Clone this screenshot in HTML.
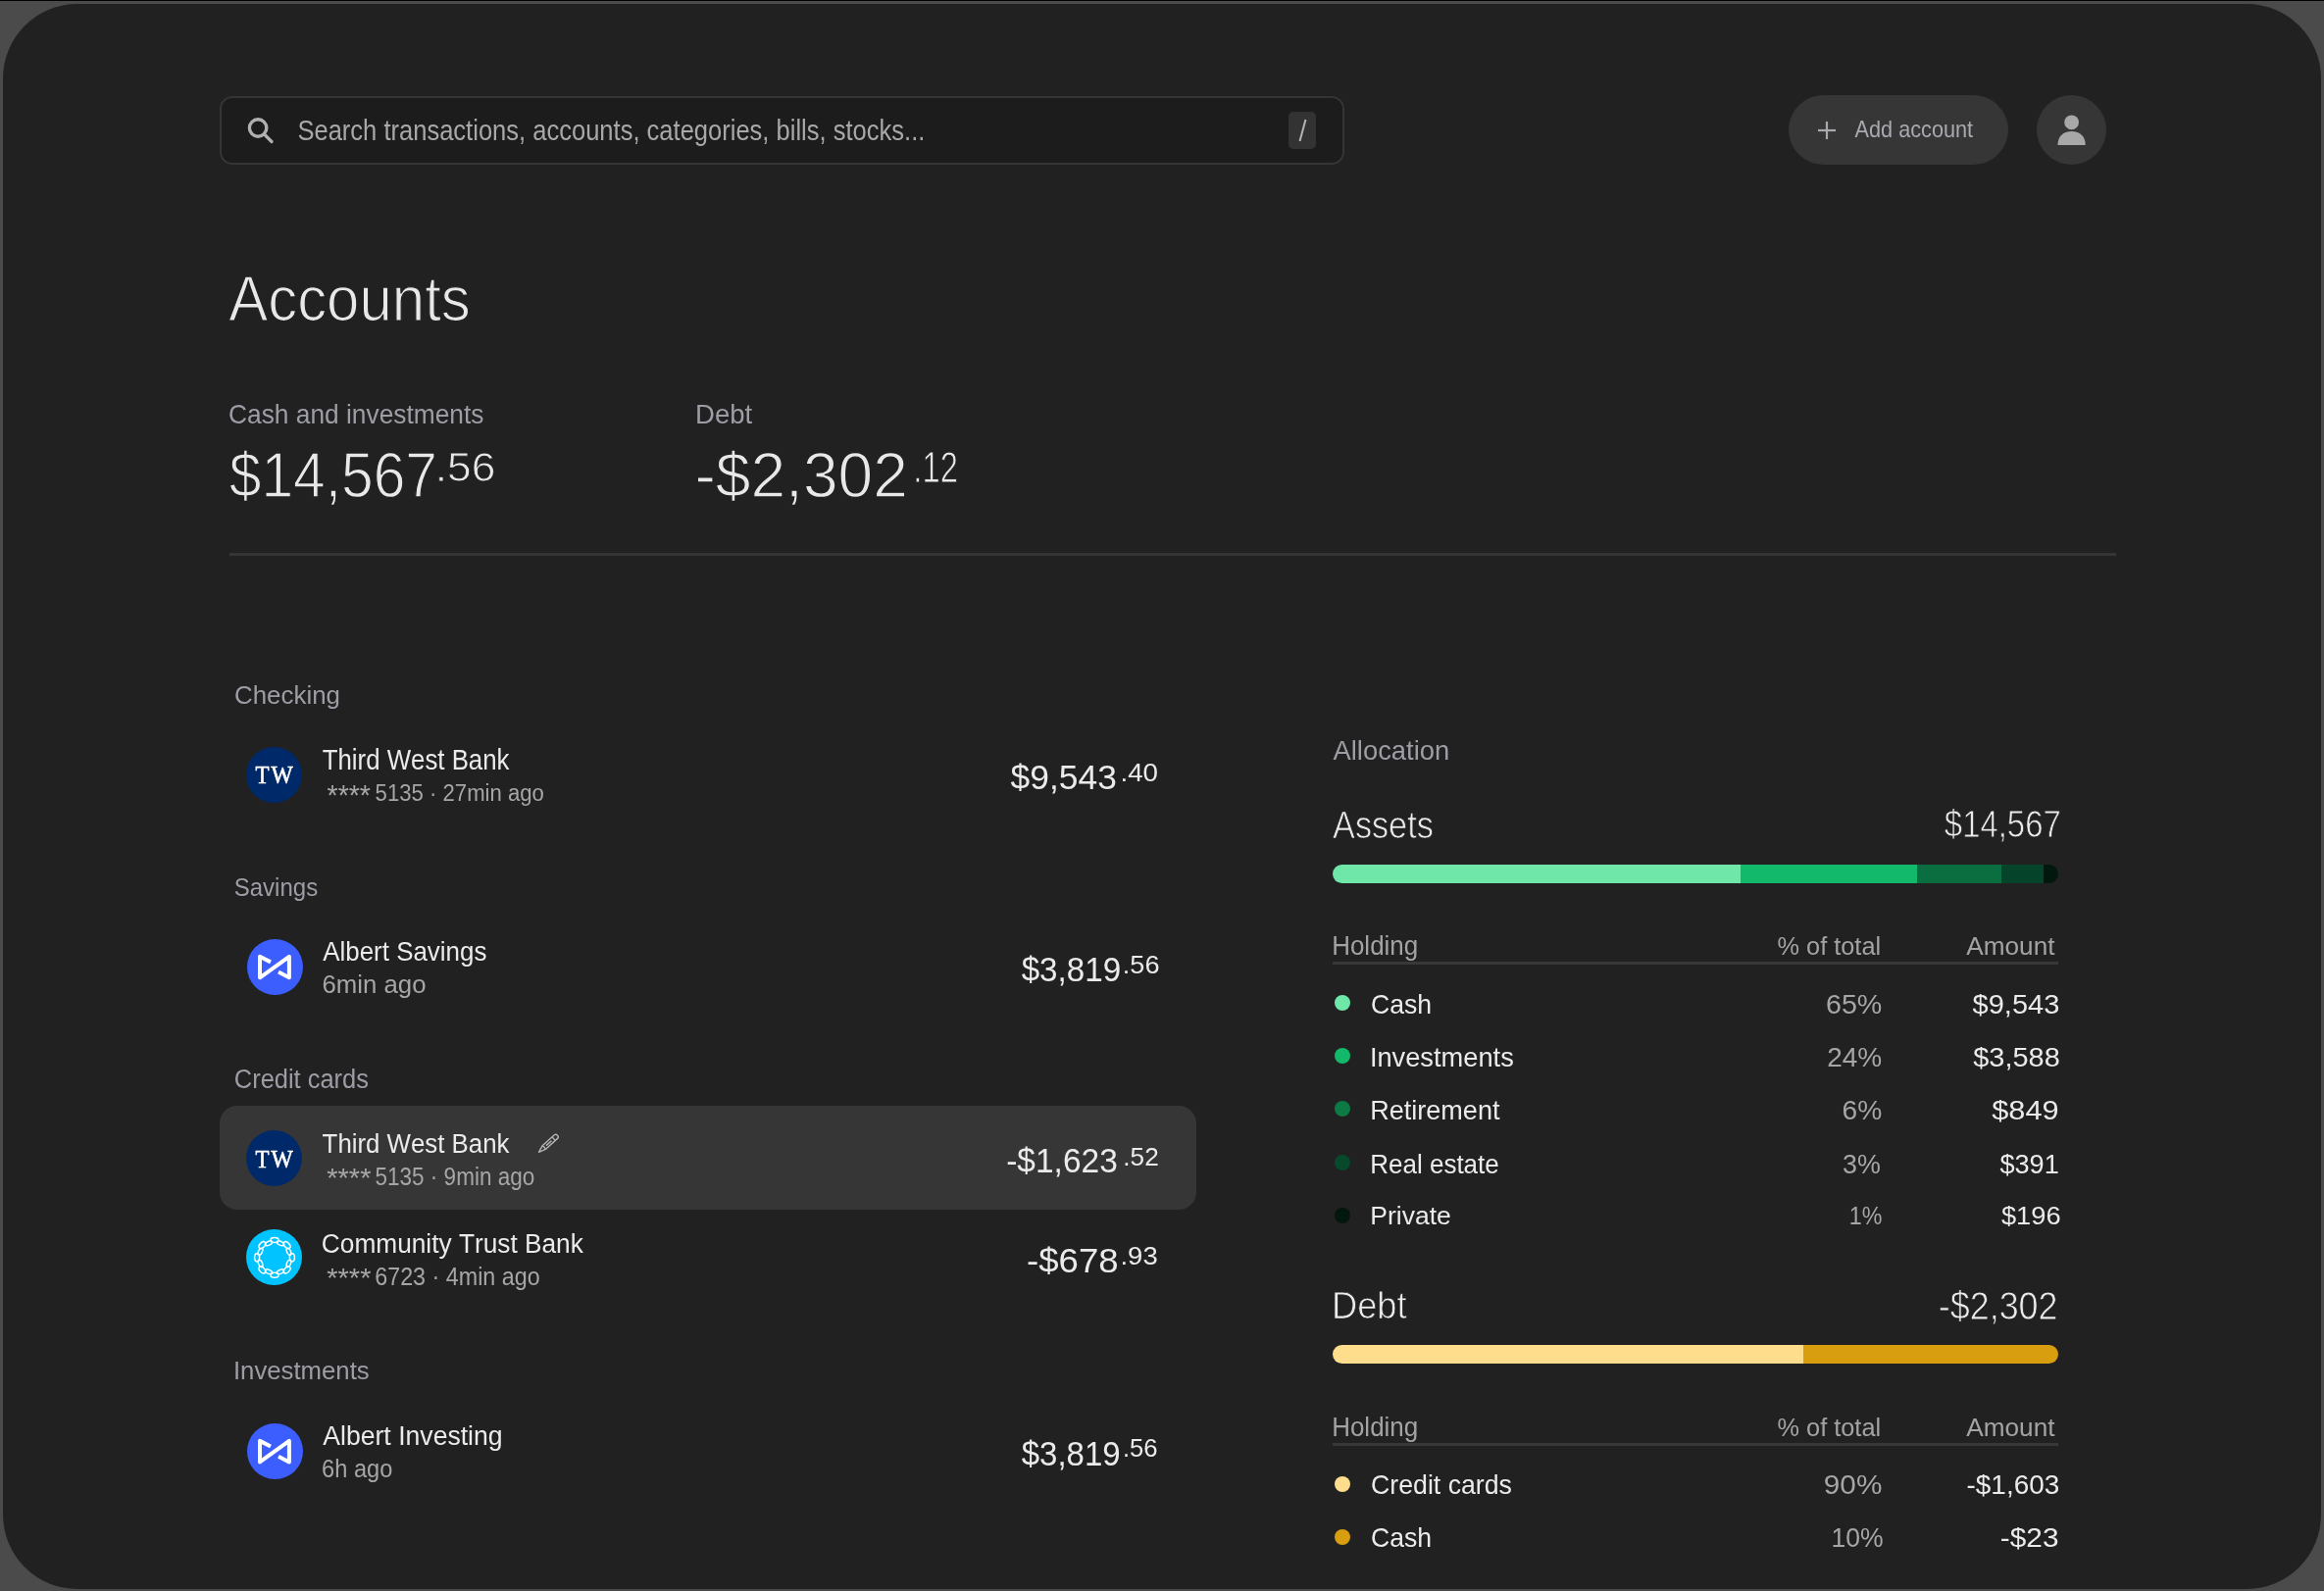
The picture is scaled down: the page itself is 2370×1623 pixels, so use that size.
<!DOCTYPE html>
<html><head><meta charset="utf-8"><title>Accounts</title>
<style>
html,body{margin:0;padding:0;width:2370px;height:1623px;overflow:hidden;background:#4b4b4b;font-family:"Liberation Sans",sans-serif}
.abs{position:absolute}
#topline{left:0;top:0;width:2370px;height:1px;background:#000}
#win{left:3px;top:4px;width:2364px;height:1617px;border-radius:76px;background:#212121}
#search{left:224px;top:98px;width:1143px;height:66px;border:2px solid #353535;border-radius:13px;background:#1c1c1c}
#key{left:1314px;top:114px;width:28px;height:38px;border-radius:5px;background:#333}
#addbtn{left:1824px;top:97px;width:224px;height:71px;border-radius:36px;background:#363636}
#avatar{left:2077px;top:97px;width:71px;height:71px;border-radius:50%;background:#363636}
#divider{left:234px;top:564px;width:1924px;height:3px;background:#353535}
#hl{left:224px;top:1128px;width:996px;height:106px;border-radius:18px;background:#363636}
.logo{width:57px;height:57px;border-radius:50%}
.tw{background:#00296a}
.alb{background:#3d5eff}
.ctb{background:#00c3ff}
.bar{height:19px;border-radius:10px;overflow:hidden;display:flex}
.bar div{height:100%}
.hline{height:3px;background:#383838}
.dot{width:16px;height:16px;border-radius:50%}
svg{position:absolute;left:0;top:0;will-change:transform}
text{font-family:"Liberation Sans",sans-serif;font-kerning:none}
</style></head>
<body>
<div class="abs" id="topline"></div>
<div class="abs" id="win"></div>
<div class="abs" id="search"></div>
<div class="abs" id="key"></div>
<div class="abs" id="addbtn"></div>
<div class="abs" id="avatar"></div>
<div class="abs" id="divider"></div>
<div class="abs" id="hl"></div>

<div class="abs logo tw" style="left:251px;top:762px"></div>
<div class="abs logo alb" style="left:252px;top:958px"></div>
<div class="abs logo tw" style="left:251px;top:1153px"></div>
<div class="abs logo ctb" style="left:251px;top:1254px"></div>
<div class="abs logo alb" style="left:252px;top:1452px"></div>

<div class="abs bar" style="left:1359px;top:882px;width:740px">
  <div style="width:416px;background:#6ee7a8"></div>
  <div style="width:180px;background:#12b96b"></div>
  <div style="width:86px;background:#0b6e41"></div>
  <div style="width:43px;background:#05432a"></div>
  <div style="width:15px;background:#02170d"></div>
</div>
<div class="abs bar" style="left:1359px;top:1372px;width:740px">
  <div style="width:480px;background:#fedd8c"></div>
  <div style="width:260px;background:#d99e10"></div>
</div>
<div class="abs hline" style="left:1359px;top:981px;width:740px"></div>
<div class="abs hline" style="left:1359px;top:1472px;width:740px"></div>

<div class="abs dot" style="left:1361px;top:1015px;background:#6ee7a8"></div>
<div class="abs dot" style="left:1361px;top:1069px;background:#12b96b"></div>
<div class="abs dot" style="left:1361px;top:1123px;background:#0b7a44"></div>
<div class="abs dot" style="left:1361px;top:1178px;background:#064a2b"></div>
<div class="abs dot" style="left:1361px;top:1232px;background:#02180e"></div>
<div class="abs dot" style="left:1361px;top:1506px;background:#fedd8c"></div>
<div class="abs dot" style="left:1361px;top:1560px;background:#d99e10"></div>

<svg width="2370" height="1623" viewBox="0 0 2370 1623">
<!-- search icon -->
<circle cx="263.1" cy="130.5" r="8.7" fill="none" stroke="#b0b0b0" stroke-width="3.4"/>
<line x1="269.5" y1="137" x2="277" y2="144.5" stroke="#b0b0b0" stroke-width="3.2" stroke-linecap="round"/>
<!-- slash -->
<line x1="1331.5" y1="122" x2="1325.5" y2="144" stroke="#b5b5b5" stroke-width="2"/>
<!-- plus -->
<line x1="1854" y1="133" x2="1872" y2="133" stroke="#a9a9b0" stroke-width="2.2"/>
<line x1="1863" y1="124" x2="1863" y2="142" stroke="#a9a9b0" stroke-width="2.2"/>
<!-- person -->
<circle cx="2112.6" cy="124.8" r="7.4" fill="#a8a8a8"/>
<path d="M2098.5 148 C2098.5 139 2104 134 2112.6 134 C2121.2 134 2126.7 139 2126.7 148 Z" fill="#a8a8a8"/>
<path transform="translate(251.6 958.2)" d="M24.4 23.2 L13.4 17.6 L13.4 39.1 L43.3 17.6 L43.3 39.1 L32.4 33.4" fill="none" stroke="#fff" stroke-width="4" stroke-linejoin="round"/>
<path transform="translate(251.6 1452.3)" d="M24.4 23.2 L13.4 17.6 L13.4 39.1 L43.3 17.6 L43.3 39.1 L32.4 33.4" fill="none" stroke="#fff" stroke-width="4" stroke-linejoin="round"/>
<ellipse cx="280.00" cy="1264.90" rx="4.10" ry="2.50" transform="rotate(0.0 280.00 1264.90)" fill="none" stroke="#fff" stroke-width="1.5"/>
<ellipse cx="286.01" cy="1268.30" rx="3.80" ry="2.00" transform="rotate(22.5 286.01 1268.30)" fill="none" stroke="#fff" stroke-width="1.5"/>
<ellipse cx="292.66" cy="1270.14" rx="4.10" ry="2.50" transform="rotate(45.0 292.66 1270.14)" fill="none" stroke="#fff" stroke-width="1.5"/>
<ellipse cx="294.50" cy="1276.79" rx="3.80" ry="2.00" transform="rotate(67.5 294.50 1276.79)" fill="none" stroke="#fff" stroke-width="1.5"/>
<ellipse cx="297.90" cy="1282.80" rx="4.10" ry="2.50" transform="rotate(90.0 297.90 1282.80)" fill="none" stroke="#fff" stroke-width="1.5"/>
<ellipse cx="294.50" cy="1288.81" rx="3.80" ry="2.00" transform="rotate(112.5 294.50 1288.81)" fill="none" stroke="#fff" stroke-width="1.5"/>
<ellipse cx="292.66" cy="1295.46" rx="4.10" ry="2.50" transform="rotate(135.0 292.66 1295.46)" fill="none" stroke="#fff" stroke-width="1.5"/>
<ellipse cx="286.01" cy="1297.30" rx="3.80" ry="2.00" transform="rotate(157.5 286.01 1297.30)" fill="none" stroke="#fff" stroke-width="1.5"/>
<ellipse cx="280.00" cy="1300.70" rx="4.10" ry="2.50" transform="rotate(180.0 280.00 1300.70)" fill="none" stroke="#fff" stroke-width="1.5"/>
<ellipse cx="273.99" cy="1297.30" rx="3.80" ry="2.00" transform="rotate(202.5 273.99 1297.30)" fill="none" stroke="#fff" stroke-width="1.5"/>
<ellipse cx="267.34" cy="1295.46" rx="4.10" ry="2.50" transform="rotate(225.0 267.34 1295.46)" fill="none" stroke="#fff" stroke-width="1.5"/>
<ellipse cx="265.50" cy="1288.81" rx="3.80" ry="2.00" transform="rotate(247.5 265.50 1288.81)" fill="none" stroke="#fff" stroke-width="1.5"/>
<ellipse cx="262.10" cy="1282.80" rx="4.10" ry="2.50" transform="rotate(270.0 262.10 1282.80)" fill="none" stroke="#fff" stroke-width="1.5"/>
<ellipse cx="265.50" cy="1276.79" rx="3.80" ry="2.00" transform="rotate(292.5 265.50 1276.79)" fill="none" stroke="#fff" stroke-width="1.5"/>
<ellipse cx="267.34" cy="1270.14" rx="4.10" ry="2.50" transform="rotate(315.0 267.34 1270.14)" fill="none" stroke="#fff" stroke-width="1.5"/>
<ellipse cx="273.99" cy="1268.30" rx="3.80" ry="2.00" transform="rotate(337.5 273.99 1268.30)" fill="none" stroke="#fff" stroke-width="1.5"/>
<g transform="translate(549.5 1175.3) rotate(-42)" fill="none" stroke="#b4b4b4" stroke-width="1.4" stroke-linejoin="round"><path d="M0 0 L7 -2.4 L23.5 -2.4 Q25.5 -2.4 25.5 -0.4 L25.5 0.4 Q25.5 2.4 23.5 2.4 L7 2.4 Z"/><path d="M7 -2.4 Q8 0 7 2.4"/><path d="M20.4 -2.4 L20.4 2.4"/><path d="M10 0 L17.4 0"/></g>
<text x="260.39" y="799.20" font-size="25.19" fill="#ffffff" textLength="13.99" lengthAdjust="spacingAndGlyphs" style="font-family:'Liberation Serif'" stroke="#fff" stroke-width="0.6">T</text>
<text x="276.48" y="799.20" font-size="25.19" fill="#ffffff" textLength="22.27" lengthAdjust="spacingAndGlyphs" style="font-family:'Liberation Serif'" stroke="#fff" stroke-width="0.6">W</text>
<text x="260.39" y="1190.70" font-size="25.19" fill="#ffffff" textLength="13.99" lengthAdjust="spacingAndGlyphs" style="font-family:'Liberation Serif'" stroke="#fff" stroke-width="0.6">T</text>
<text x="276.48" y="1190.70" font-size="25.19" fill="#ffffff" textLength="22.27" lengthAdjust="spacingAndGlyphs" style="font-family:'Liberation Serif'" stroke="#fff" stroke-width="0.6">W</text>
<text x="303.44" y="142.70" font-size="29.13" fill="#a8a8a8" textLength="639.89" lengthAdjust="spacingAndGlyphs" style="font-family:'Liberation Sans'">Search transactions, accounts, categories, bills, stocks...</text>
<text x="1891.56" y="140.00" font-size="23.19" fill="#a9a9b0" textLength="120.60" lengthAdjust="spacingAndGlyphs" style="font-family:'Liberation Sans'">Add account</text>
<text x="233.16" y="326.83" font-size="64.42" fill="#e8e8e8" textLength="246.64" lengthAdjust="spacingAndGlyphs" style="font-family:'Liberation Sans'" stroke="#212121" stroke-width="1.25">Accounts</text>
<text x="233.06" y="431.80" font-size="28.12" fill="#9d9da6" textLength="260.39" lengthAdjust="spacingAndGlyphs" style="font-family:'Liberation Sans'">Cash and investments</text>
<text x="233.73" y="506.64" font-size="65.62" fill="#e8e8e8" textLength="212.26" lengthAdjust="spacingAndGlyphs" style="font-family:'Liberation Sans'" stroke="#212121" stroke-width="1.28">$14,567</text>
<text x="443.84" y="491.42" font-size="43.25" fill="#e8e8e8" textLength="61.53" lengthAdjust="spacingAndGlyphs" style="font-family:'Liberation Sans'" stroke="#212121" stroke-width="0.84">.56</text>
<text x="709.04" y="431.60" font-size="27.83" fill="#9d9da6" textLength="58.16" lengthAdjust="spacingAndGlyphs" style="font-family:'Liberation Sans'">Debt</text>
<text x="708.51" y="507.34" font-size="65.62" fill="#e8e8e8" textLength="217.35" lengthAdjust="spacingAndGlyphs" style="font-family:'Liberation Sans'" stroke="#212121" stroke-width="1.28">-$2,302</text>
<text x="931.37" y="492.04" font-size="45.04" fill="#e8e8e8" textLength="45.51" lengthAdjust="spacingAndGlyphs" style="font-family:'Liberation Sans'" stroke="#212121" stroke-width="0.88">.12</text>
<text x="238.98" y="718.20" font-size="25.94" fill="#9d9da6" textLength="107.98" lengthAdjust="spacingAndGlyphs" style="font-family:'Liberation Sans'">Checking</text>
<text x="328.72" y="784.60" font-size="28.84" fill="#ebebeb" textLength="190.74" lengthAdjust="spacingAndGlyphs" style="font-family:'Liberation Sans'">Third West Bank</text>
<text x="333.54" y="820.69" font-size="29.34" fill="#a6a6a6" textLength="44.41" lengthAdjust="spacingAndGlyphs" style="font-family:'Liberation Sans'">****</text>
<text x="382.61" y="817.30" font-size="24.35" fill="#a6a6a6" textLength="172.32" lengthAdjust="spacingAndGlyphs" style="font-family:'Liberation Sans'">5135 · 27min ago</text>
<text x="1030.62" y="805.00" font-size="34.78" fill="#ebebeb" textLength="108.24" lengthAdjust="spacingAndGlyphs" style="font-family:'Liberation Sans'">$9,543</text>
<text x="1142.46" y="797.00" font-size="26.09" fill="#ebebeb" textLength="38.62" lengthAdjust="spacingAndGlyphs" style="font-family:'Liberation Sans'">.40</text>
<text x="238.71" y="913.60" font-size="25.80" fill="#9d9da6" textLength="85.46" lengthAdjust="spacingAndGlyphs" style="font-family:'Liberation Sans'">Savings</text>
<text x="329.25" y="980.20" font-size="27.54" fill="#ebebeb" textLength="167.09" lengthAdjust="spacingAndGlyphs" style="font-family:'Liberation Sans'">Albert Savings</text>
<text x="328.49" y="1012.90" font-size="24.93" fill="#a6a6a6" textLength="105.99" lengthAdjust="spacingAndGlyphs" style="font-family:'Liberation Sans'">6min ago</text>
<text x="1041.64" y="1001.10" font-size="35.36" fill="#ebebeb" textLength="101.53" lengthAdjust="spacingAndGlyphs" style="font-family:'Liberation Sans'">$3,819</text>
<text x="1144.83" y="993.00" font-size="26.38" fill="#ebebeb" textLength="37.66" lengthAdjust="spacingAndGlyphs" style="font-family:'Liberation Sans'">.56</text>
<text x="238.81" y="1109.80" font-size="26.81" fill="#9d9da6" textLength="137.11" lengthAdjust="spacingAndGlyphs" style="font-family:'Liberation Sans'">Credit cards</text>
<text x="328.62" y="1175.70" font-size="27.39" fill="#ebebeb" textLength="190.84" lengthAdjust="spacingAndGlyphs" style="font-family:'Liberation Sans'">Third West Bank</text>
<text x="333.23" y="1210.60" font-size="28.49" fill="#a6a6a6" textLength="45.22" lengthAdjust="spacingAndGlyphs" style="font-family:'Liberation Sans'">****</text>
<text x="382.50" y="1209.20" font-size="26.38" fill="#a6a6a6" textLength="162.75" lengthAdjust="spacingAndGlyphs" style="font-family:'Liberation Sans'">5135 · 9min ago</text>
<text x="1026.21" y="1196.40" font-size="35.07" fill="#ebebeb" textLength="113.56" lengthAdjust="spacingAndGlyphs" style="font-family:'Liberation Sans'">-$1,623</text>
<text x="1145.31" y="1188.80" font-size="26.09" fill="#ebebeb" textLength="36.41" lengthAdjust="spacingAndGlyphs" style="font-family:'Liberation Sans'">.52</text>
<text x="327.87" y="1277.80" font-size="27.39" fill="#ebebeb" textLength="266.99" lengthAdjust="spacingAndGlyphs" style="font-family:'Liberation Sans'">Community Trust Bank</text>
<text x="333.23" y="1312.80" font-size="28.49" fill="#a6a6a6" textLength="45.22" lengthAdjust="spacingAndGlyphs" style="font-family:'Liberation Sans'">****</text>
<text x="382.22" y="1311.30" font-size="26.23" fill="#a6a6a6" textLength="168.46" lengthAdjust="spacingAndGlyphs" style="font-family:'Liberation Sans'">6723 · 4min ago</text>
<text x="1047.08" y="1298.30" font-size="34.49" fill="#ebebeb" textLength="93.51" lengthAdjust="spacingAndGlyphs" style="font-family:'Liberation Sans'">-$678</text>
<text x="1142.49" y="1290.40" font-size="25.94" fill="#ebebeb" textLength="38.22" lengthAdjust="spacingAndGlyphs" style="font-family:'Liberation Sans'">.93</text>
<text x="237.92" y="1407.00" font-size="24.93" fill="#9d9da6" textLength="138.81" lengthAdjust="spacingAndGlyphs" style="font-family:'Liberation Sans'">Investments</text>
<text x="329.25" y="1474.10" font-size="28.12" fill="#ebebeb" textLength="183.37" lengthAdjust="spacingAndGlyphs" style="font-family:'Liberation Sans'">Albert Investing</text>
<text x="328.10" y="1506.80" font-size="24.93" fill="#a6a6a6" textLength="72.19" lengthAdjust="spacingAndGlyphs" style="font-family:'Liberation Sans'">6h ago</text>
<text x="1041.65" y="1494.50" font-size="35.36" fill="#ebebeb" textLength="101.02" lengthAdjust="spacingAndGlyphs" style="font-family:'Liberation Sans'">$3,819</text>
<text x="1144.96" y="1486.20" font-size="26.09" fill="#ebebeb" textLength="35.67" lengthAdjust="spacingAndGlyphs" style="font-family:'Liberation Sans'">.56</text>
<text x="1359.45" y="775.20" font-size="27.97" fill="#9d9da6" textLength="118.83" lengthAdjust="spacingAndGlyphs" style="font-family:'Liberation Sans'">Allocation</text>
<text x="1359.06" y="854.57" font-size="38.18" fill="#ebebeb" textLength="102.75" lengthAdjust="spacingAndGlyphs" style="font-family:'Liberation Sans'" stroke="#212121" stroke-width="0.74">Assets</text>
<text x="1982.87" y="854.38" font-size="39.07" fill="#ebebeb" textLength="118.87" lengthAdjust="spacingAndGlyphs" style="font-family:'Liberation Sans'" stroke="#212121" stroke-width="0.76">$14,567</text>
<text x="1358.17" y="974.40" font-size="26.96" fill="#a3a3a3" textLength="88.11" lengthAdjust="spacingAndGlyphs" style="font-family:'Liberation Sans'">Holding</text>
<text x="1812.50" y="974.00" font-size="26.09" fill="#a3a3a3" textLength="105.60" lengthAdjust="spacingAndGlyphs" style="font-family:'Liberation Sans'">% of total</text>
<text x="2005.25" y="974.00" font-size="26.09" fill="#a3a3a3" textLength="90.24" lengthAdjust="spacingAndGlyphs" style="font-family:'Liberation Sans'">Amount</text>
<text x="1358.17" y="1465.10" font-size="27.39" fill="#a3a3a3" textLength="88.11" lengthAdjust="spacingAndGlyphs" style="font-family:'Liberation Sans'">Holding</text>
<text x="1812.50" y="1464.70" font-size="26.52" fill="#a3a3a3" textLength="105.60" lengthAdjust="spacingAndGlyphs" style="font-family:'Liberation Sans'">% of total</text>
<text x="2005.25" y="1464.70" font-size="26.52" fill="#a3a3a3" textLength="90.24" lengthAdjust="spacingAndGlyphs" style="font-family:'Liberation Sans'">Amount</text>
<text x="1398.05" y="1033.60" font-size="27.97" fill="#ebebeb" textLength="62.08" lengthAdjust="spacingAndGlyphs" style="font-family:'Liberation Sans'">Cash</text>
<text x="1861.94" y="1033.60" font-size="27.97" fill="#a6a6a6" textLength="57.38" lengthAdjust="spacingAndGlyphs" style="font-family:'Liberation Sans'">65%</text>
<text x="2011.59" y="1033.60" font-size="27.97" fill="#ebebeb" textLength="88.69" lengthAdjust="spacingAndGlyphs" style="font-family:'Liberation Sans'">$9,543</text>
<text x="1396.89" y="1088.00" font-size="27.54" fill="#ebebeb" textLength="146.90" lengthAdjust="spacingAndGlyphs" style="font-family:'Liberation Sans'">Investments</text>
<text x="1863.19" y="1088.00" font-size="27.54" fill="#a6a6a6" textLength="56.11" lengthAdjust="spacingAndGlyphs" style="font-family:'Liberation Sans'">24%</text>
<text x="2012.29" y="1088.00" font-size="27.54" fill="#ebebeb" textLength="88.47" lengthAdjust="spacingAndGlyphs" style="font-family:'Liberation Sans'">$3,588</text>
<text x="1397.18" y="1142.20" font-size="27.54" fill="#ebebeb" textLength="132.32" lengthAdjust="spacingAndGlyphs" style="font-family:'Liberation Sans'">Retirement</text>
<text x="1878.57" y="1142.20" font-size="27.54" fill="#a6a6a6" textLength="40.74" lengthAdjust="spacingAndGlyphs" style="font-family:'Liberation Sans'">6%</text>
<text x="2031.27" y="1142.20" font-size="27.54" fill="#ebebeb" textLength="68.39" lengthAdjust="spacingAndGlyphs" style="font-family:'Liberation Sans'">$849</text>
<text x="1397.27" y="1197.20" font-size="28.12" fill="#ebebeb" textLength="131.49" lengthAdjust="spacingAndGlyphs" style="font-family:'Liberation Sans'">Real estate</text>
<text x="1878.98" y="1197.20" font-size="28.12" fill="#a6a6a6" textLength="38.78" lengthAdjust="spacingAndGlyphs" style="font-family:'Liberation Sans'">3%</text>
<text x="2039.41" y="1197.20" font-size="28.12" fill="#ebebeb" textLength="60.42" lengthAdjust="spacingAndGlyphs" style="font-family:'Liberation Sans'">$391</text>
<text x="1397.22" y="1248.90" font-size="26.67" fill="#ebebeb" textLength="82.55" lengthAdjust="spacingAndGlyphs" style="font-family:'Liberation Sans'">Private</text>
<text x="1885.73" y="1248.90" font-size="26.67" fill="#a6a6a6" textLength="33.60" lengthAdjust="spacingAndGlyphs" style="font-family:'Liberation Sans'">1%</text>
<text x="2040.91" y="1248.90" font-size="26.67" fill="#ebebeb" textLength="60.69" lengthAdjust="spacingAndGlyphs" style="font-family:'Liberation Sans'">$196</text>
<text x="1398.04" y="1524.10" font-size="28.12" fill="#ebebeb" textLength="143.92" lengthAdjust="spacingAndGlyphs" style="font-family:'Liberation Sans'">Credit cards</text>
<text x="1859.81" y="1524.10" font-size="28.12" fill="#a6a6a6" textLength="59.56" lengthAdjust="spacingAndGlyphs" style="font-family:'Liberation Sans'">90%</text>
<text x="2005.56" y="1524.10" font-size="28.12" fill="#ebebeb" textLength="94.67" lengthAdjust="spacingAndGlyphs" style="font-family:'Liberation Sans'">-$1,603</text>
<text x="1398.05" y="1578.00" font-size="27.68" fill="#ebebeb" textLength="62.08" lengthAdjust="spacingAndGlyphs" style="font-family:'Liberation Sans'">Cash</text>
<text x="1867.48" y="1578.00" font-size="27.68" fill="#a6a6a6" textLength="53.17" lengthAdjust="spacingAndGlyphs" style="font-family:'Liberation Sans'">10%</text>
<text x="2039.88" y="1578.00" font-size="27.68" fill="#ebebeb" textLength="59.63" lengthAdjust="spacingAndGlyphs" style="font-family:'Liberation Sans'">-$23</text>
<text x="1357.95" y="1345.18" font-size="38.62" fill="#ebebeb" textLength="76.70" lengthAdjust="spacingAndGlyphs" style="font-family:'Liberation Sans'" stroke="#212121" stroke-width="0.75">Debt</text>
<text x="1976.71" y="1345.99" font-size="40.26" fill="#ebebeb" textLength="121.89" lengthAdjust="spacingAndGlyphs" style="font-family:'Liberation Sans'" stroke="#212121" stroke-width="0.78">-$2,302</text>
</svg>
</body></html>
